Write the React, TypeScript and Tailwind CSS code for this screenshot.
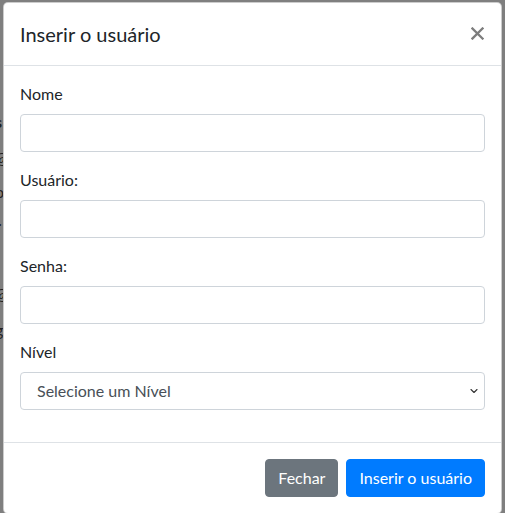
import { ChevronDown } from "lucide-react";

const fields = [
  { id: "nome", label: "Nome", type: "text" },
  { id: "usuario", label: "Usuário:", type: "text" },
  { id: "senha", label: "Senha:", type: "password" },
];

// glyphs of the page behind the backdrop, peeking out at the left edge
const peeks = [
  { top: "mt-[112px]", ch: "s", bold: true },
  { top: "mt-[16px]", ch: "@", bold: false },
  { top: "mt-[14px]", ch: "o", bold: false },
  { top: "mt-[14px]", ch: "r", bold: true },
  { top: "mt-[48px]", ch: "@", bold: false },
  { top: "mt-[16px]", ch: "g", bold: false },
];

export default function App() {
  return (
    <div
      className="w-[505px] h-[513px] overflow-hidden bg-[#7f7f7f] flex flex-row text-[#212529]"
      style={{ fontFamily: "Lato, 'Liberation Sans', sans-serif" }}
    >
      <div className="w-[3px] shrink-0 overflow-hidden flex flex-col" aria-hidden="true">
        {peeks.map((p, i) => (
          <span
            key={i}
            className={`${p.top} -ml-[5px] text-[16px] leading-[20px] text-[#222] ${
              p.bold ? "font-bold" : ""
            }`}
          >
            {p.ch}
          </span>
        ))}
      </div>

      <div className="mt-[2px] w-[499px] shrink-0 self-start bg-white border border-black/20 rounded-[5px]">
        <header className="flex flex-row items-start justify-between p-4 border-b border-[#dee2e6]">
          <h5 className="text-[20px] leading-[30px] font-normal">Inserir o usuário</h5>
          <button type="button" className="mt-[8px] mr-[1px]" aria-label="Fechar">
            <svg width="13" height="13" viewBox="0 0 13 13">
              <path
                d="M1.5 1.5 L11.5 11.5 M11.5 1.5 L1.5 11.5"
                stroke="#7d7d7d"
                strokeWidth="2.3"
                strokeLinecap="square"
              />
            </svg>
          </button>
        </header>

        <form className="p-4" onSubmit={(e) => e.preventDefault()}>
          {fields.map((f) => (
            <div key={f.id} className="mb-4">
              <label htmlFor={f.id} className="block mb-2 text-[16px] leading-6">
                {f.label}
              </label>
              <input
                id={f.id}
                type={f.type}
                className="block w-full h-[38px] px-3 border border-[#ced4da] rounded-[4px] bg-white outline-none text-[#495057]"
              />
            </div>
          ))}
          <div className="mb-4">
            <label htmlFor="nivel" className="block mb-2 text-[16px] leading-6">
              Nível
            </label>
            <div className="relative">
              <select
                id="nivel"
                defaultValue=""
                className="block w-full h-[38px] pl-4 pr-8 appearance-none border border-[#ced4da] rounded-[4px] bg-white outline-none text-[16px] text-[#495057]"
              >
                <option value="">Selecione um Nível</option>
                <option value="1">Administrador</option>
                <option value="2">Usuário</option>
              </select>
              <ChevronDown
                className="absolute right-[5px] top-[13px] pointer-events-none text-[#333]"
                size={12}
                strokeWidth={2.2}
              />
            </div>
          </div>
        </form>

        <footer className="flex flex-row items-center justify-end p-3 border-t border-[#dee2e6]">
          <button
            type="button"
            className="m-1 px-3 py-1.5 text-[16px] leading-6 text-white bg-[#6c757d] border border-[#6c757d] rounded-[4px]"
          >
            Fechar
          </button>
          <button
            type="submit"
            className="m-1 px-3 py-1.5 text-[16px] leading-6 text-white bg-[#007bff] border border-[#007bff] rounded-[4px]"
          >
            Inserir o usuário
          </button>
        </footer>
      </div>
    </div>
  );
}
